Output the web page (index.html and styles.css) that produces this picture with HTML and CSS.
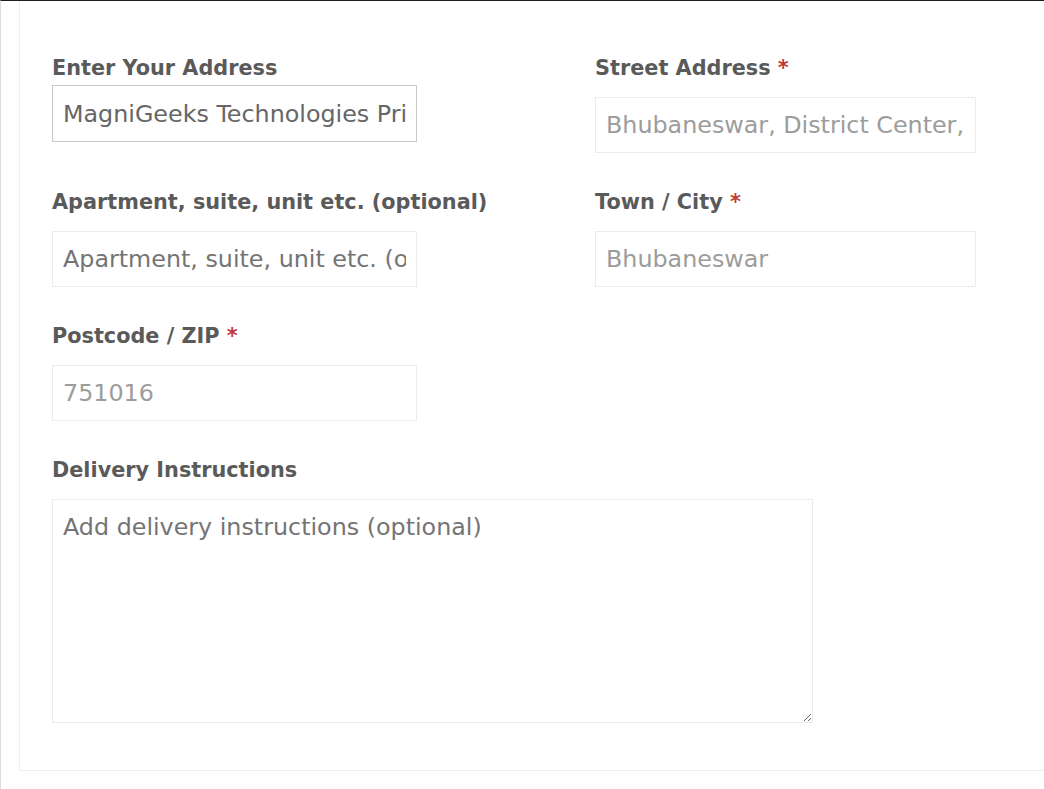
FILE: index.html
```html
<!DOCTYPE html>
<html lang="en">
<head>
<meta charset="utf-8">
<title>Address</title>
<link rel="stylesheet" href="styles.css">
</head>
<body>
<div class="page">
  <div class="card">
    <div class="grid">
      <div class="field">
        <label class="label" for="addr">Enter Your Address</label>
        <input class="input input-focus first" id="addr" type="text" value="MagniGeeks Technologies Private Limited">
      </div>
      <div class="field">
        <label class="label" for="street">Street Address <span class="req">*</span></label>
        <input class="input wide muted" id="street" type="text" value="Bhubaneswar, District Center, Chandrasekharpur">
      </div>
      <div class="field">
        <label class="label" for="apt">Apartment, suite, unit etc. (optional)</label>
        <input class="input" id="apt" type="text" placeholder="Apartment, suite, unit etc. (optional)">
      </div>
      <div class="field">
        <label class="label" for="city">Town / City <span class="req">*</span></label>
        <input class="input wide muted" id="city" type="text" value="Bhubaneswar">
      </div>
      <div class="field">
        <label class="label" for="zip">Postcode / ZIP <span class="req">*</span></label>
        <input class="input muted" id="zip" type="text" value="751016">
      </div>
      <div class="field"></div>
      <div class="field full">
        <label class="label" for="notes">Delivery Instructions</label>
        <textarea class="textarea" id="notes" placeholder="Add delivery instructions (optional)"></textarea>
      </div>
    </div>
  </div>
</div>
</body>
</html>
```
FILE: styles.css
```css
html, body {
  margin: 0;
  padding: 0;
  background: #fff;
  overflow: hidden;
}
body {
  font-family: "DejaVu Sans", "Liberation Sans", sans-serif;
  color: #5e5e5e;
}
.page {
  height: 789px;
  box-sizing: border-box;
  border-top: 1px solid #1f1f1f;
  border-left: 1px solid #dcdcdc;
  padding-left: 18px;
}
.card {
  box-sizing: border-box;
  border-left: 1px solid #efefef;
  border-bottom: 1px solid #ececec;
  padding: 51px 0 47px 32px;
}
.grid {
  display: grid;
  grid-template-columns: 543px 1fr;
  align-items: start;
  row-gap: 33px;
}
.field {
  display: flex;
  flex-direction: column;
  align-items: flex-start;
}
.full {
  grid-column: 1 / span 2;
}
.label {
  display: block;
  font-size: 20.8px;
  line-height: 30px;
  padding-top: 1px;
  font-weight: 700;
  color: #5a5a5a;
  margin-bottom: 14px;
  white-space: nowrap;
}
.req {
  color: #c23b3b;
}
.input {
  box-sizing: border-box;
  width: 365px;
  height: 56px;
  margin: 0;
  padding: 0 10px;
  border: 1px solid #ebebeb;
  border-radius: 0;
  background: #fff;
  font-family: "DejaVu Sans", "Liberation Sans", sans-serif;
  font-size: 23.8px;
  color: #666;
  outline: none;
}
.input::placeholder,
.textarea::placeholder {
  color: #747474;
  opacity: 1;
}
.input-focus {
  border-color: #c8c8c8;
}
.first {
  height: 57px;
  margin-top: -12px;
}
.wide {
  width: 381px;
}
.muted {
  color: #9c9c9c;
}
.textarea {
  box-sizing: border-box;
  display: block;
  width: 761px;
  height: 224px;
  margin: 0;
  padding: 9px 10px;
  border: 1px solid #ebebeb;
  border-radius: 0;
  background: #fff;
  font-family: "DejaVu Sans", "Liberation Sans", sans-serif;
  font-size: 23.8px;
  line-height: 36px;
  color: #666;
  outline: none;
}
```
